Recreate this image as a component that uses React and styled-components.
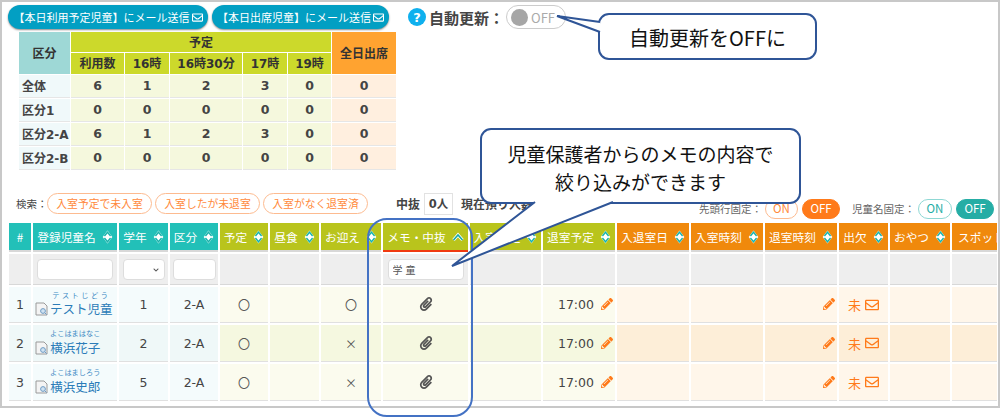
import styled, { createGlobalStyle } from 'styled-components';
import { FaPaperclip, FaPencilAlt, FaRegEnvelope, FaChevronDown } from 'react-icons/fa';

const GlobalStyle = createGlobalStyle`
    * { box-sizing: border-box; }
    html, body {
        margin: 0;
        background: #fff;
        overflow: hidden;
    }
    body {
        font-family: "DejaVu Sans", "Noto Sans CJK JP", sans-serif;
        color: #444;
    }
`;

const Page = styled.div`
    position: relative;
    width: 1000px;
    height: 418px;
    overflow: hidden;
`;

const Frame = styled.div`
    width: 1000px;
    height: 408px;
    border: 2px solid #c8c8c8;
    padding-top: 3px;
    overflow: hidden;
`;

const TopBar = styled.div`
    display: flex;
    align-items: center;
    height: 24px;
    padding-left: 6px;
    gap: 4px;
`;

const MailButton = styled.div`
    display: flex;
    align-items: center;
    justify-content: center;
    gap: 2px;
    width: ${p => p.$w}px;
    height: 24px;
    border-radius: 12px;
    background: #029fc3;
    box-shadow: 0 1px 2px #888;
    color: #fff;
    font-size: 11px;
    font-family: "Noto Sans CJK JP", sans-serif;
    white-space: nowrap;
`;

const Help = styled.div`
    display: flex;
    align-items: center;
    justify-content: center;
    width: 18px;
    height: 18px;
    margin-left: 15px;
    border-radius: 50%;
    background: #0fb0ee;
    color: #fff;
    font-size: 13px;
    font-weight: 700;
`;

const AutoLabel = styled.div`
    margin-left: -1px;
    width: 73px;
    font-size: 15px;
    font-weight: 700;
    font-family: "Noto Sans CJK JP", sans-serif;
    color: #444;
    white-space: nowrap;
`;

const AutoSwitch = styled.div`
    display: flex;
    align-items: center;
    gap: 3px;
    width: 60px;
    height: 24px;
    padding-left: 4px;
    border: 1px solid #ccc;
    border-radius: 12px;
    color: #aaa;
    font-size: 13px;
    font-family: "Noto Sans CJK JP", sans-serif;
`;

const Knob = styled.span`
    width: 17px;
    height: 17px;
    border-radius: 50%;
    background: #a6a6a6;
`;

const SummaryTable = styled.table`
    table-layout: fixed;
    width: 379px;
    margin: 2px 0 0 16px;
    border-collapse: separate;
    border-spacing: 1px;
    font-size: 12.5px;
    font-weight: 700;
    text-align: center;

    th, td {
        padding: 0 0 2px;
    }
`;

const SumHead = styled.th`
    height: ${p => p.$h || 20}px;
    background: ${p => p.$bg};
    color: #333;
    font-size: 12px;
`;

const SumLabel = styled.td`
    height: 23px;
    padding-left: 3px !important;
    background: #f0f9fa;
    border-bottom: 1px solid #e6e6e6;
    font-size: 12px;
    text-align: left;
    white-space: nowrap;
`;

const SumCell = styled.td`
    background: ${p => (p.$orange ? '#ffefdf' : '#f5f8dd')};
    border-bottom: 1px solid #e6e6e6;
`;

const SearchBar = styled.div`
    display: flex;
    height: 26px;
    margin-top: 22px;
    padding-left: 14px;
    font-size: 11px;
    justify-content: space-between;
`;

const SearchGroup = styled.div`
    display: flex;
    align-items: flex-start;
    white-space: nowrap;
`;

const SearchTitle = styled.span`
    width: 31px;
    line-height: 21px;
    font-size: 10.5px;
    font-family: "Noto Sans CJK JP", sans-serif;
`;

const Pill = styled.span`
    width: 105px;
    height: 21px;
    margin-right: 3px;
    border: 1px solid #fdbb90;
    border-radius: 11px;
    color: #ff8a3c;
    font-family: "Noto Sans CJK JP", sans-serif;
    font-size: 10.8px;
    line-height: 18px;
    text-align: center;
`;

const CountLabel = styled.span`
    margin-left: ${p => p.$gap || 0}px;
    line-height: 21px;
    font-size: 12px;
    font-weight: 700;
    font-family: "Noto Sans CJK JP", sans-serif;
`;

const CountBox = styled.span`
    width: 29px;
    height: 22px;
    margin: 0 8px 0 4px;
    border: 1px solid #e2e2e2;
    font-size: 11.5px;
    font-weight: 700;
    line-height: 20px;
    text-align: center;
`;

const FixGroup = styled.div`
    display: flex;
    align-items: flex-end;
    height: 26px;
    white-space: nowrap;
`;

const FixLabel = styled.span`
    margin-left: ${p => p.$gap || 0}px;
    margin-right: 3px;
    color: #666;
    font-size: 10.5px;
    line-height: 20px;
    font-family: "Noto Sans CJK JP", sans-serif;
`;

const FixButton = styled.span`
    width: ${p => p.$w}px;
    height: 20px;
    margin-right: 4px;
    border-radius: 10px;
    border: 1px solid ${p => p.$color};
    background: ${p => (p.$on ? p.$color : '#fff')};
    color: ${p => (p.$on ? '#fff' : p.$text)};
    font-family: "Noto Sans CJK JP", sans-serif;
    font-size: 11.5px;
    line-height: 17px;
    text-align: center;
`;

const MainTable = styled.table`
    table-layout: fixed;
    width: 992px;
    margin: 2px 0 0 5px;
    border-collapse: separate;
    border-spacing: 2px;

    th, td {
        padding: 0;
    }
`;

const tones = {
    teal: { head: '#22c0b8', light: '#f4fbfc', dark: '#eff8f8' },
    olive: { head: '#b9c41c', light: '#fbfbee', dark: '#f5f8e0' },
    orange: { head: '#f0890c', light: '#fff6ea', dark: '#fdeed8' },
};

const HeadCell = styled.th`
    height: 29px;
    background: ${p => tones[p.$tone].head};
    border-bottom: 2px solid ${p => (p.$sorted ? '#f03a10' : '#d8d8d8')};
    color: #fff;
    font-size: 11.7px;
    font-weight: 400;
    font-family: "Noto Sans CJK JP", sans-serif;
    overflow: hidden;
`;

const HeadInner = styled.div`
    display: flex;
    align-items: center;
    justify-content: ${p => (p.$clip ? 'flex-start' : 'center')};
    gap: 6px;
    padding-left: ${p => (p.$clip ? 6 : 0)}px;
    white-space: nowrap;
`;

const FilterCell = styled.td`
    height: 31px;
    background: #eeeeee;
    border-bottom: 1px solid #d8d8d8;
    text-align: center;
`;

const FilterInput = styled.input`
    display: block;
    width: ${p => p.$w}px;
    height: 21px;
    margin: 0 auto;
    padding: 0 3px 0 4px;
    border: 1px solid #dddddd;
    border-radius: 4px;
    background: #fff;
    color: #555;
    font-size: 10px;
    letter-spacing: 3px;
    font-family: "Noto Sans CJK JP", sans-serif;
    outline: none;
`;

const SelectWrap = styled.div`
    position: relative;
    width: 42px;
    height: 21px;
    margin: 0 auto;
`;

const FilterSelect = styled.select`
    display: block;
    width: 42px;
    height: 21px;
    border: 1px solid #dddddd;
    border-radius: 4px;
    background: #fff;
    appearance: none;
`;

const SelectArrow = styled(FaChevronDown)`
    position: absolute;
    right: 6px;
    top: 8px;
    color: #555;
    font-size: 6px;
    pointer-events: none;
`;

const BodyCell = styled.td`
    height: ${p => p.$h}px;
    background: ${p => tones[p.$tone][p.$even ? 'dark' : 'light']};
    border-bottom: 1px solid #e0e0e0;
    font-size: 12.5px;
    color: #444;
    text-align: ${p => p.$align || 'center'};
    padding-right: ${p => (p.$align === 'right' ? 2 : 0)}px !important;
    white-space: nowrap;
`;

const NameWrap = styled.div`
    display: flex;
    align-items: flex-end;
    gap: 2px;
    padding: 0 0 1px 2px;
`;

const NameText = styled.div`
    display: flex;
    flex-direction: column;
    align-items: center;
    color: #2b7cb8;
    font-size: 12.5px;
    font-family: "Noto Sans CJK JP", sans-serif;
    line-height: 18px;
`;

const Kana = styled.span`
    font-size: 7.2px;
    line-height: 10.5px;
    letter-spacing: ${p => p.$ls || 0}px;
    color: #3d8ac4;
`;

const RecordWrap = styled.span`
    display: flex;
    padding-bottom: 2px;
`;

const Edit = styled(FaPencilAlt)`
    margin-left: 7px;
    color: #ff7a1a;
    font-size: 12px;
    vertical-align: -1px;
`;

const Clip = styled(FaPaperclip)`
    color: #555;
    font-size: 14px;
    vertical-align: -2px;
`;

const Absent = styled.span`
    display: inline-flex;
    align-items: center;
    gap: 4px;
    color: #ff7a1a;
    font-size: 13px;
    font-family: "Noto Sans CJK JP", sans-serif;
`;

const Mark = styled.span`
    font-family: "Noto Sans CJK JP", sans-serif;
    font-size: 12px;
    color: #555;
`;

const Highlight = styled.div`
    position: absolute;
    left: 367px;
    top: 218px;
    width: 106px;
    height: 199px;
    border: 2.5px solid #4472c4;
    border-radius: 20px;
`;

const Callout = styled.div`
    position: absolute;
    left: ${p => p.$x}px;
    top: ${p => p.$y}px;
    width: ${p => p.$w}px;
    height: ${p => p.$h}px;
    display: flex;
    align-items: center;
    justify-content: center;
    padding-top: 3px;
    border: 2px solid #2f5597;
    border-radius: 11px;
    background: #fff;
    color: #111;
    font-size: ${p => p.$fs}px;
    line-height: 28px;
    text-align: center;
    font-family: "Noto Sans CJK JP", sans-serif;
`;

const Tail = styled.svg`
    position: absolute;
    left: 0;
    top: 0;
    width: 1px;
    height: 1px;
    overflow: visible;
`;

const columns = [
    { label: '#', w: 22, tone: 'teal', plain: true },
    { label: '登録児童名', w: 84, tone: 'teal' },
    { label: '学年', w: 49, tone: 'teal' },
    { label: '区分', w: 48, tone: 'teal' },
    { label: '予定', w: 48, tone: 'olive' },
    { label: '昼食', w: 49, tone: 'olive' },
    { label: 'お迎え', w: 60, tone: 'olive' },
    { label: 'メモ・中抜', w: 85, tone: 'olive', sorted: true },
    { label: '入室予定', w: 71, tone: 'olive' },
    { label: '退室予定', w: 72, tone: 'olive' },
    { label: '入退室日', w: 72, tone: 'orange' },
    { label: '入室時刻', w: 72, tone: 'orange' },
    { label: '退室時刻', w: 72, tone: 'orange' },
    { label: '出欠', w: 49, tone: 'orange' },
    { label: 'おやつ', w: 60, tone: 'orange' },
    { label: 'スポット', w: 45, tone: 'orange', plain: true, clip: true },
];

const children = [
    { no: 1, kana: 'テストじどう', kanaLs: 2.5, name: 'テスト児童', grade: 1, pick: '〇', h: 36 },
    { no: 2, kana: 'よこはまはなこ', kanaLs: 0, name: '横浜花子', grade: 2, pick: '×', h: 37 },
    { no: 3, kana: 'よこはましろう', kanaLs: 0, name: '横浜史郎', grade: 5, pick: '×', h: 37 },
];

const summary = [
    { label: '全体', v: [6, 1, 2, 3, 0, 0] },
    { label: '区分1', v: [0, 0, 0, 0, 0, 0] },
    { label: '区分2-A', v: [6, 1, 2, 3, 0, 0] },
    { label: '区分2-B', v: [0, 0, 0, 0, 0, 0] },
];

const SortIcon = () => (
    <svg width="11" height="14" viewBox="0 0 12 16">
        <path d="M6 0.5 L11.5 8 L6 15.5 L0.5 8 Z" fill="#fff" />
        <path d="M2.5 6.8 L6 2.5 L9.5 6.8 M2.5 9.2 L6 13.5 L9.5 9.2" fill="none" stroke="#18b3ac" strokeWidth="1.6" />
    </svg>
);

const SortUpIcon = () => (
    <svg width="12" height="10" viewBox="0 0 12 10">
        <path d="M1.5 8 L6 3 L10.5 8" fill="none" stroke="#fff" strokeWidth="3.2" />
        <path d="M1.5 8 L6 3 L10.5 8" fill="none" stroke="#18a9a4" strokeWidth="1.6" />
    </svg>
);

const RecordIcon = () => (
    <svg width="13" height="14" viewBox="0 0 13 14">
        <path d="M1 1 H9 L12 4 V13 H1 Z" fill="#f4f4f4" stroke="#9a9a9a" />
        <circle cx="8" cy="9" r="2.4" fill="#cfe2f2" stroke="#6f9cc4" />
        <path d="M9.8 10.8 L11.6 12.6" stroke="#6f9cc4" />
    </svg>
);

const App = () => {
    return (
        <Page>
            <GlobalStyle />
            <Frame>
                <TopBar>
                    <MailButton $w={200}>【本日利用予定児童】にメール送信 <FaRegEnvelope size={11} /></MailButton>
                    <MailButton $w={177}>【本日出席児童】にメール送信 <FaRegEnvelope size={11} /></MailButton>
                    <Help>?</Help>
                    <AutoLabel>自動更新：</AutoLabel>
                    <AutoSwitch><Knob />OFF</AutoSwitch>
                </TopBar>

                <SummaryTable>
                    <colgroup>
                        <col width="51" />
                        <col width="53" />
                        <col width="44" />
                        <col width="72" />
                        <col width="44" />
                        <col width="43" />
                        <col width="64" />
                    </colgroup>
                    <thead>
                        <tr>
                            <SumHead rowSpan={2} $bg="#9ed8d6">区分</SumHead>
                            <SumHead colSpan={5} $bg="#ccd92b">予定</SumHead>
                            <SumHead rowSpan={2} $bg="#ffa330">全日出席</SumHead>
                        </tr>
                        <tr>
                            {['利用数', '16時', '16時30分', '17時', '19時'].map(h => (
                                <SumHead key={h} $h={21} $bg="#ccd92b">{h}</SumHead>
                            ))}
                        </tr>
                    </thead>
                    <tbody>
                        {summary.map(row => (
                            <tr key={row.label}>
                                <SumLabel>{row.label}</SumLabel>
                                {row.v.map((n, i) => (
                                    <SumCell key={i} $orange={i === 5}>{n}</SumCell>
                                ))}
                            </tr>
                        ))}
                    </tbody>
                </SummaryTable>

                <SearchBar>
                    <SearchGroup>
                        <SearchTitle>検索：</SearchTitle>
                        <Pill>入室予定で未入室</Pill>
                        <Pill>入室したが未退室</Pill>
                        <Pill>入室がなく退室済</Pill>
                        <CountLabel $gap={25}>中抜</CountLabel>
                        <CountBox>0人</CountBox>
                        <CountLabel>現在預り人数</CountLabel>
                    </SearchGroup>
                    <FixGroup>
                        <FixLabel>先頭行固定：</FixLabel>
                        <FixButton $w={33} $color="#fdbb90" $text="#ff8a3c">ON</FixButton>
                        <FixButton $w={38} $color="#ff7a1a" $on>OFF</FixButton>
                        <FixLabel $gap={8}>児童名固定：</FixLabel>
                        <FixButton $w={34} $color="#8fd8d4" $text="#25ada5">ON</FixButton>
                        <FixButton $w={38} $color="#25ada5" $on>OFF</FixButton>
                    </FixGroup>
                </SearchBar>

                <MainTable>
                    <colgroup>
                        {columns.map(c => <col key={c.label} width={c.w} />)}
                    </colgroup>
                    <thead>
                        <tr>
                            {columns.map(c => (
                                <HeadCell key={c.label} $tone={c.tone} $sorted={c.sorted}>
                                    <HeadInner $clip={c.clip}>
                                        {c.label}
                                        {!c.plain && (c.sorted ? <SortUpIcon /> : <SortIcon />)}
                                    </HeadInner>
                                </HeadCell>
                            ))}
                        </tr>
                        <tr>
                            {columns.map((c, i) => (
                                <FilterCell key={c.label}>
                                    {i === 1 && <FilterInput $w={76} />}
                                    {i === 2 && (
                                        <SelectWrap>
                                            <FilterSelect><option></option></FilterSelect>
                                            <SelectArrow />
                                        </SelectWrap>
                                    )}
                                    {i === 3 && <FilterInput $w={43} />}
                                    {i === 7 && <FilterInput $w={76} defaultValue="学童" />}
                                </FilterCell>
                            ))}
                        </tr>
                    </thead>
                    <tbody>
                        {children.map((child, r) => {
                            const even = r === 1;
                            const cell = (i, content, align) => (
                                <BodyCell key={i} $h={child.h} $tone={columns[i].tone} $even={even} $align={align}>
                                    {content}
                                </BodyCell>
                            );
                            return (
                                <tr key={child.no}>
                                    {cell(0, child.no)}
                                    {cell(1, (
                                        <NameWrap>
                                            <RecordWrap><RecordIcon /></RecordWrap>
                                            <NameText>
                                                <Kana $ls={child.kanaLs}>{child.kana}</Kana>
                                                {child.name}
                                            </NameText>
                                        </NameWrap>
                                    ))}
                                    {cell(2, child.grade)}
                                    {cell(3, '2-A')}
                                    {cell(4, <Mark>〇</Mark>)}
                                    {cell(5, '')}
                                    {cell(6, <Mark>{child.pick}</Mark>)}
                                    {cell(7, <Clip />)}
                                    {cell(8, '')}
                                    {cell(9, <>17:00<Edit /></>, 'right')}
                                    {cell(10, '')}
                                    {cell(11, '')}
                                    {cell(12, <Edit />, 'right')}
                                    {cell(13, <Absent>未<FaRegEnvelope size={14} /></Absent>)}
                                    {cell(14, '')}
                                    {cell(15, '')}
                                </tr>
                            );
                        })}
                    </tbody>
                </MainTable>
            </Frame>

            <Highlight />

            <Callout $x={598} $y={13} $w={219} $h={47} $fs={20}>
                <Tail><path d="M0 7 L-43 1 L0 17" fill="#fff" stroke="#2f5597" strokeWidth="2" /></Tail>
                自動更新をOFFに
            </Callout>
            <Callout $x={480} $y={128} $w={321} $h={76} $fs={19}>
                <Tail><path d="M53 72 L-30 136 L131 72" fill="#fff" stroke="#2f5597" strokeWidth="2" /></Tail>
                <div>児童保護者からのメモの内容で<br />絞り込みができます</div>
            </Callout>
        </Page>
    );
};

export default App;
